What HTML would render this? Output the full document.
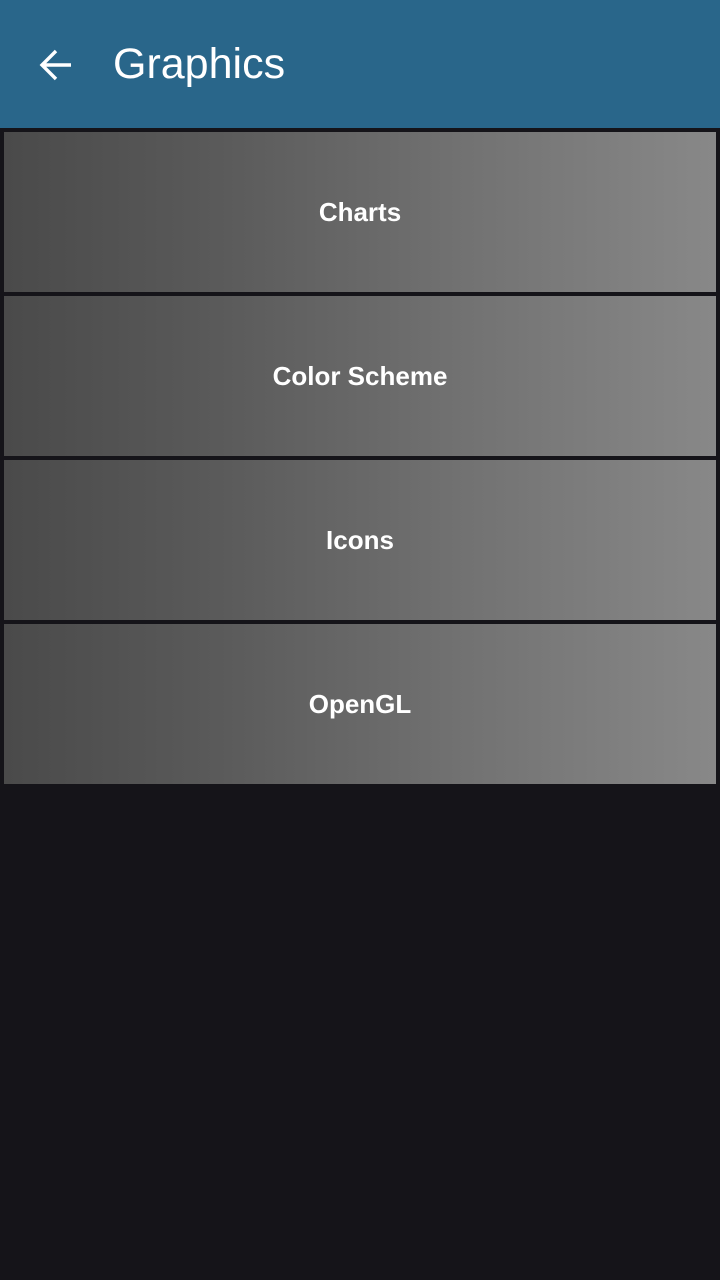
<!DOCTYPE html>
<html><head><style>
html,body{margin:0;padding:0;width:720px;height:1280px;background:#151419;overflow:hidden;font-family:"Liberation Sans",Roboto,sans-serif}
.bar{position:absolute;left:0;top:0;width:720px;height:128px;background:#29668a}
.bar svg{position:absolute;left:38px;top:47px}
.bar .t{position:absolute;left:113px;top:38px;font-size:43px;color:#fff;line-height:52px}
.item{position:absolute;left:4px;width:712px;height:160px;background:linear-gradient(to right,#4a4a4a,#5a5a5a 30%,#727272 65%,#888888);color:#fff;font-size:26px;font-weight:bold;display:flex;align-items:center;justify-content:center}
</style></head><body>
<div class="bar">
<svg width="36" height="36" viewBox="0 0 36 36"><path d="M33 18H5M18 4L4 18l14 14" stroke="#fff" stroke-width="3.4" fill="none"/></svg>
<div class="t">Graphics</div>
</div>
<div class="item" style="top:132px">Charts</div>
<div class="item" style="top:296px">Color Scheme</div>
<div class="item" style="top:460px">Icons</div>
<div class="item" style="top:624px">OpenGL</div>
</body></html>
